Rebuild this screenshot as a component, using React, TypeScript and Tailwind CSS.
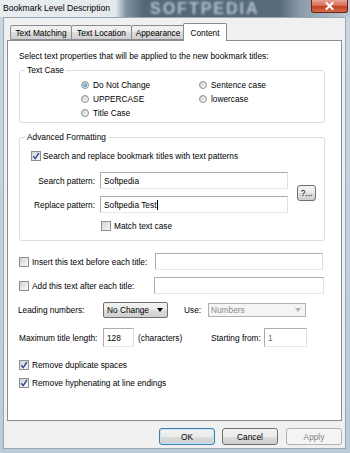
import React from 'react';

const winBtn = 'bg-[linear-gradient(#f2f2f2,#ebebeb_50%,#dddddd_50%,#cfcfcf)]';

const Check = ({ checked }: { checked?: boolean }) => (
  <span className="w-[10px] h-[10px] shrink-0 border border-[#8e8f8f] bg-[linear-gradient(135deg,#d2d4d8,#f7f7f7)] flex items-center justify-center">
    {checked && (
      <svg width="8" height="8" viewBox="0 0 8 8">
        <path d="M1.2 4.2 L3.2 6.6 L6.9 1" fill="none" stroke="#2f4c8f" strokeWidth="1.4" />
      </svg>
    )}
  </span>
);

const Radio = ({ checked }: { checked?: boolean }) => (
  <span className="w-[8px] h-[8px] shrink-0 rounded-full border border-[#8e8f8f] bg-[linear-gradient(135deg,#cfd1d4,#f7f7f7)] flex items-center justify-center">
    {checked && <span className="w-[4px] h-[4px] rounded-full bg-[radial-gradient(circle_at_35%_35%,#8fd0f5,#1f6fb0)]" />}
  </span>
);

const TextBox = ({ w, h = 17, value, muted, caret }: { w: number; h?: number; value?: string; muted?: boolean; caret?: boolean }) => (
  <div
    className="border border-[#abadb3] border-b-[#e3e9ef] border-r-[#dbdfe6] bg-white flex items-center pl-[3px]"
    style={{ width: w, height: h }}
  >
    <span className={muted ? 'text-[#6d6d6d]' : 'text-black'}>{value}</span>
    {caret && <span className="ml-px w-px h-[10px] bg-black" />}
  </div>
);

const Tab = ({ label, w, selected }: { label: string; w: number; selected?: boolean }) => (
  <div
    className={
      selected
        ? 'relative z-10 -mb-px h-[18px] -ml-[2px] border border-b-0 border-[#898c95] bg-white flex items-center justify-center rounded-t-[2px]'
        : `h-[15px] -ml-px first:ml-0 border border-[#898c95] ${winBtn} flex items-center justify-center rounded-t-[2px]`
    }
    style={{ width: w }}
  >
    {label}
  </div>
);

const Button = ({ label, def, disabled }: { label: string; def?: boolean; disabled?: boolean }) => (
  <div
    className={
      disabled
        ? 'w-[56px] h-[17px] rounded-[3px] border border-[#adb2b5] bg-[#f4f4f4] text-[#838383] flex items-center justify-center'
        : def
        ? `w-[56px] h-[17px] rounded-[3px] border border-[#3c7fb1] shadow-[inset_0_0_0_1px_#c4e5f6] ${winBtn} flex items-center justify-center`
        : `w-[56px] h-[17px] rounded-[3px] border border-[#707070] ${winBtn} flex items-center justify-center`
    }
  >
    {label}
  </div>
);

export default function App() {
  return (
    <div className="w-[350px] h-[453px] overflow-hidden bg-[linear-gradient(#c9d6e2,#bccbd9)] font-['Liberation_Sans',Arial,sans-serif] text-[8.3px] leading-[10px] text-black flex flex-col">
      {/* Title bar */}
      <div className="relative h-[17px] shrink-0 flex items-start bg-[linear-gradient(90deg,#e9edf0_0%,#e4e9ed_33%,#8193a0_36%,#52687a_41%,#566b7c_80%,#8c9cab_86%,#bcc8d2_100%)]">
        <span className="absolute left-[150px] top-0 text-[16px] leading-[17px] font-bold tracking-[2px] text-[#d5dde3] blur-[1.2px] opacity-75">SOFTPEDIA</span>
        <span className="relative ml-[3px] mt-[3px] text-[8.6px] leading-[10px] text-black">Bookmark Level Description</span>
        <div className="relative ml-auto mr-[2px] w-[37px] h-[13px] rounded-b-[3px] border border-t-0 border-[#6d2119] bg-[linear-gradient(#e8a493,#d6705b_45%,#c2401f_55%,#d2704f)] flex items-center justify-center">
          <svg width="9" height="8" viewBox="0 0 9 8">
            <path d="M1.5 1 L7.5 7 M7.5 1 L1.5 7" stroke="#fff" strokeWidth="2" strokeLinecap="square" />
          </svg>
        </div>
      </div>

      {/* Client */}
      <div className="mx-[3px] mr-[4px] h-[432px] border border-[#9aa7b3] bg-[#f0f0f0] flex flex-col">
        <div className="h-[22px] pt-[6px] pl-[6px] flex items-end">
          <Tab label="Text Matching" w={62} />
          <Tab label="Text Location" w={61} />
          <Tab label="Appearance" w={54} />
          <Tab label="Content" w={44} selected />
        </div>

        <div className="ml-[3px] w-[335px] h-[381px] border border-[#898c95] bg-white pl-[11px] flex flex-col">
          <div className="mt-[10px] h-[10px]">Select text properties that will be applied to the new bookmark titles:</div>

          <fieldset className="mt-[4px] w-[306px] border border-[#d5dfe5] rounded-[3px]">
            <legend className="ml-[5px] px-[2px] leading-[10px]">Text Case</legend>
            <div className="pt-[3px] pb-[2px] pl-[61px] grid grid-cols-[118px_auto]">
              {[
                ['Do Not Change', true],
                ['Sentence case', false],
                ['UPPERCASE', false],
                ['lowercase', false],
                ['Title Case', false],
              ].map(([t, c]) => (
                <div key={t as string} className="h-[14px] flex items-center gap-[4px]">
                  <Radio checked={c as boolean} />
                  <span>{t}</span>
                </div>
              ))}
            </div>
          </fieldset>

          <fieldset className="mt-[9px] w-[306px] border border-[#d5dfe5] rounded-[3px]">
            <legend className="ml-[5px] px-[2px] leading-[10px]">Advanced Formatting</legend>
            <div className="mt-[8px] h-[11px] pl-[11px] flex items-center gap-[2px]">
              <Check checked />
              <span>Search and replace bookmark titles with text patterns</span>
            </div>
            <div className="mt-[11px] flex items-center">
              <div className="flex flex-col gap-[7px]">
                <div className="h-[17px] flex items-center">
                  <span className="w-[76px] pr-px text-right">Search pattern:</span>
                  <span className="ml-[4px]"><TextBox w={188} value="Softpedia" /></span>
                </div>
                <div className="h-[17px] flex items-center">
                  <span className="w-[76px] pr-px text-right">Replace pattern:</span>
                  <span className="ml-[4px]"><TextBox w={188} value="Softpedia Test" caret /></span>
                </div>
              </div>
              <div className={`ml-[9px] w-[19px] h-[16px] rounded-[3px] border border-[#707070] ${winBtn} flex items-center justify-center`}>?...</div>
            </div>
            <div className="mt-[8px] mb-[9px] h-[10px] pl-[81px] flex items-center gap-[3px]">
              <Check />
              <span>Match text case</span>
            </div>
          </fieldset>

          <div className="mt-[12px] h-[17px] flex items-center">
            <div className="w-[136px] flex items-center gap-[3px]">
              <Check />
              <span>Insert this text before each title:</span>
            </div>
            <TextBox w={168} />
          </div>

          <div className="mt-[7px] h-[17px] flex items-center">
            <div className="w-[135px] flex items-center gap-[3px]">
              <Check />
              <span>Add this text after each title:</span>
            </div>
            <TextBox w={170} />
          </div>

          <div className="mt-[8px] h-[16px] flex items-center">
            <span className="w-[84px] -ml-px">Leading numbers:</span>
            <div className={`ml-px w-[65px] h-[16px] rounded-[2px] border border-[#707070] ${winBtn} flex items-center pl-[3px] pr-[4px]`}>
              <span>No Change</span>
              <svg className="ml-auto" width="6" height="4" viewBox="0 0 6 4">
                <path d="M0 0 H6 L3 4 Z" fill="#000" />
              </svg>
            </div>
            <span className="ml-[16px] w-[24px]">Use:</span>
            <div className="w-[98px] h-[14px] border border-[#adb2b5] bg-[#f4f4f4] text-[#8d8d8d] flex items-center pl-[2px] pr-[4px]">
              <span>Numbers</span>
              <svg className="ml-auto" width="6" height="4" viewBox="0 0 6 4">
                <path d="M0 0 H6 L3 4 Z" fill="#b4b4b4" />
              </svg>
            </div>
          </div>

          <div className="mt-[10px] h-[19px] flex items-center">
            <span className="w-[84px]">Maximum title length:</span>
            <TextBox w={31} h={19} value="128" />
            <span className="ml-[4px] w-[73px]">(characters)</span>
            <span className="w-[53px]">Starting from:</span>
            <TextBox w={43} h={19} value="1" muted />
          </div>

          <div className="mt-[13px] h-[10px] flex items-center gap-[3px]">
            <Check checked />
            <span>Remove duplicate spaces</span>
          </div>
          <div className="mt-[8px] h-[10px] flex items-center gap-[3px]">
            <Check checked />
            <span>Remove hyphenating at line endings</span>
          </div>
        </div>

        <div className="mt-[7px] pr-[3px] flex justify-end">
          <Button label="OK" def />
          <span className="ml-[7px]"><Button label="Cancel" /></span>
          <span className="ml-[8px]"><Button label="Apply" disabled /></span>
        </div>
      </div>
    </div>
  );
}
